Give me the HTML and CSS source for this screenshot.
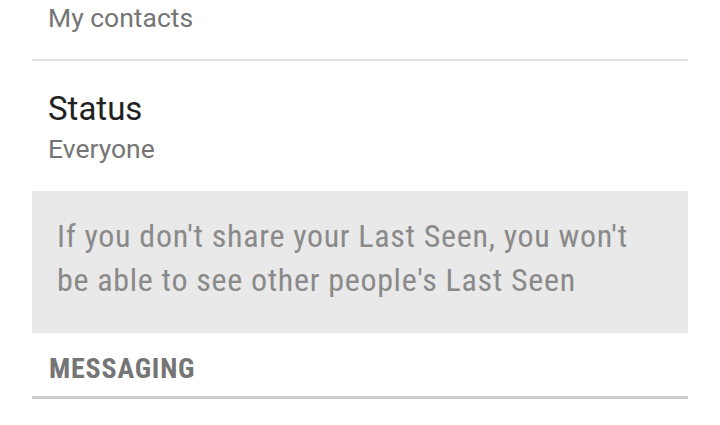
FILE: index.html
```html
<!DOCTYPE html>
<html>
<head>
<meta charset="utf-8">
<link rel="stylesheet" href="styles.css">
</head>
<body>
<div class="screen">
  <div class="row row-top">
    <div class="summary">My contacts</div>
  </div>
  <div class="divider"></div>
  <div class="row row-status">
    <div class="title">Status</div>
    <div class="summary summary-gap">Everyone</div>
  </div>
  <div class="info">
    <p class="info-text">If you don't share your Last Seen, you won't be able to see other people's Last Seen</p>
  </div>
  <div class="section">
    <div class="section-title">MESSAGING</div>
  </div>
</div>
</body>
</html>
```

FILE: styles.css
```css
html, body {
  margin: 0;
  padding: 0;
  background: #ffffff;
}
body {
  font-family: Roboto, "Noto Sans", sans-serif;
  width: 720px;
  height: 425px;
  overflow: hidden;
}
.screen {
  margin: 0 32px;
  display: flex;
  flex-direction: column;
}
.row {
  padding-left: 16px;
}
.row-top {
  height: 59px;
}
.summary {
  font-size: 26.5px;
  line-height: 36px;
  color: #757575;
}
.summary-gap {
  margin-top: 2px;
}
.divider {
  height: 2px;
  background: #e4e4e4;
}
.row-status {
  height: 130px;
  box-sizing: border-box;
  padding-top: 28px;
}
.title {
  font-size: 33px;
  line-height: 40px;
  color: #212121;
}
.info {
  background: #e9e9e9;
  height: 142px;
  box-sizing: border-box;
  padding: 23px 30px 0 25px;
}
.info-text {
  margin: 0;
  font-family: "Roboto Condensed", "Liberation Sans Narrow", Roboto, sans-serif;
  font-size: 32px;
  letter-spacing: 0.7px;
  line-height: 44px;
  color: #8a8a8a;
}
.section {
  height: 66px;
  box-sizing: border-box;
  padding: 21px 0 0 17px;
  border-bottom: 3px solid #cccccc;
}
.section-title {
  font-family: "Roboto Condensed", "Liberation Sans Narrow", Roboto, sans-serif;
  font-weight: bold;
  font-size: 28px;
  letter-spacing: 0.8px;
  line-height: 30px;
  color: #757575;
}
```
